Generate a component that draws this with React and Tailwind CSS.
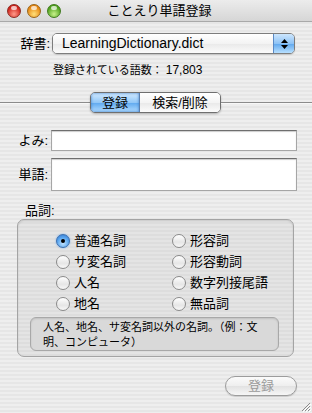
import React from 'react';

const font = { fontFamily: '"Liberation Sans", "Noto Sans CJK JP", sans-serif' };

function Light({ from, to, edge }) {
    return (
        <div
            className="w-[14px] h-[14px] rounded-full border relative overflow-hidden"
            style={{ background: `radial-gradient(circle at 50% 75%, ${from} 0%, ${to} 70%)`, borderColor: edge }}
        >
            <div className="absolute left-[3px] top-[1px] w-[6px] h-[4px] rounded-full bg-white/70" />
        </div>
    );
}

function Radio({ checked, label }) {
    return (
        <div className="flex items-center h-[21px]">
            {checked ? (
                <div className="w-[14px] h-[14px] rounded-full border border-[#3a6fb0] bg-[radial-gradient(circle_at_50%_70%,#bfe2ff_0%,#5aa6ef_55%,#2f75cf_100%)] flex items-center justify-center shadow-[0_0_2px_#6aa8ec]">
                    <div className="w-[4px] h-[4px] rounded-full bg-black" />
                </div>
            ) : (
                <div className="w-[14px] h-[14px] rounded-full border border-[#8a8a8a] bg-[linear-gradient(to_bottom,#ffffff,#e6e6e6_60%,#f8f8f8)]" />
            )}
            <span className="ml-[4px] text-[13px] text-black">{label}</span>
        </div>
    );
}

export default function App() {
    return (
        <div
            className="w-[312px] h-[413px] flex flex-col overflow-hidden bg-[repeating-linear-gradient(to_bottom,#eeeeee_0px,#eeeeee_2px,#e6e6e6_2px,#e6e6e6_4px)] relative"
            style={font}
        >
            {/* title bar */}
            <div className="h-[22px] flex items-center border-b border-[#a9a9a9] bg-[linear-gradient(to_bottom,#ececec,#d6d6d6)] relative">
                <div className="flex items-center gap-[6px] pl-[7px]">
                    <Light from="#ff9a8a" to="#cf1f17" edge="#8c2a22" />
                    <Light from="#ffe07a" to="#e6850f" edge="#9a6518" />
                    <Light from="#c8f28a" to="#4c9f1a" edge="#3f7a1d" />
                </div>
                <div className="flex-1 text-center text-[13px] text-black pr-[64px] pl-[10px]">ことえり単語登録</div>
            </div>

            {/* dictionary popup */}
            <div className="flex items-center mt-[11px] h-[21px]">
                <span className="w-[50px] text-right text-[13px] text-black">辞書:</span>
                <div className="ml-[2px] w-[243px] h-[21px] flex rounded-[5px] border border-[#7d7d7d] overflow-hidden shadow-[0_1px_1px_rgba(0,0,0,0.15)]">
                    <div className="flex-1 flex items-center pl-[9px] text-[14px] text-black bg-[linear-gradient(to_bottom,#ffffff,#f3f3f3_50%,#e9e9e9_51%,#fbfbfb)]">
                        LearningDictionary.dict
                    </div>
                    <div className="w-[21px] flex flex-col items-center justify-center gap-[2px] border-l border-[#5b89c4] bg-[linear-gradient(to_bottom,#cde6fd,#8ec3f6_50%,#5fa7ee_51%,#b8e0ff)]">
                        <svg width="7" height="4" viewBox="0 0 7 4"><path d="M3.5 0L7 4H0Z" fill="#000" /></svg>
                        <svg width="7" height="4" viewBox="0 0 7 4"><path d="M0 0H7L3.5 4Z" fill="#000" /></svg>
                    </div>
                </div>
            </div>

            <div className="mt-[9px] pl-[53px] text-[11px] leading-[14px] text-black">
                登録されている語数： <span className="text-[12px]">17,803</span>
            </div>

            {/* tab segmented control */}
            <div className="mt-[15px] h-[21px] flex items-center">
                <div className="w-[90px] h-[2px] border-t border-[#8c8c8c] border-b border-b-[#f8f8f8]" />
                <div className="w-[131px] h-[21px] flex rounded-[5px] border border-[#6f6f6f] overflow-hidden shadow-[0_1px_2px_rgba(0,0,0,0.25)]">
                    <div className="w-[49px] flex items-center justify-center text-[13px] text-black bg-[linear-gradient(to_bottom,#d4ebff,#92c7f7_50%,#5ea8ef_51%,#b2dcff)] shadow-[inset_0_0_3px_#3a79c7] border-r border-[#5a7fae]">
                        登録
                    </div>
                    <div className="flex-1 flex items-center justify-center text-[13px] text-black bg-[linear-gradient(to_bottom,#ffffff,#f4f4f4_50%,#e8e8e8_51%,#fcfcfc)]">
                        検索/削除
                    </div>
                </div>
                <div className="flex-1 h-[2px] border-t border-[#8c8c8c] border-b border-b-[#f8f8f8]" />
            </div>

            {/* fields */}
            <div className="mt-[17px] flex items-center">
                <span className="w-[48px] text-right text-[13px] text-black">よみ:</span>
                <div className="ml-[3px] w-[246px] h-[21px] bg-white border border-[#a6a6a6] border-t-[#6e6e6e] shadow-[inset_0_1px_1px_rgba(0,0,0,0.2)]" />
            </div>
            <div className="mt-[7px] flex items-center">
                <span className="w-[48px] text-right text-[13px] text-black">単語:</span>
                <div className="ml-[3px] w-[246px] h-[33px] bg-white border border-[#a6a6a6] border-t-[#6e6e6e] shadow-[inset_0_1px_1px_rgba(0,0,0,0.2)]" />
            </div>

            {/* part of speech */}
            <div className="mt-[12px] pl-[25px] text-[13px] leading-[16px] text-black">品詞:</div>
            <div className="ml-[17px] mr-[18px] h-[138px] rounded-[7px] border border-[#a4a4a4] bg-[repeating-linear-gradient(to_bottom,#e4e4e4_0px,#e4e4e4_2px,#dddddd_2px,#dddddd_4px)] shadow-[inset_0_1px_2px_rgba(0,0,0,0.12)] pt-[10px] flex flex-col">
                <div className="grid grid-cols-[116px_1fr] pl-[38px]">
                    <Radio checked label="普通名詞" />
                    <Radio label="形容詞" />
                    <Radio label="サ変名詞" />
                    <Radio label="形容動詞" />
                    <Radio label="人名" />
                    <Radio label="数字列接尾語" />
                    <Radio label="地名" />
                    <Radio label="無品詞" />
                </div>
                <div className="mt-[3px] ml-[12px] mr-[14px] h-[34px] rounded-[6px] border border-[#a8a8a8] bg-[#d9d9d9] shadow-[inset_0_1px_2px_rgba(0,0,0,0.12)] pl-[12px] pr-[6px] pt-[2px] text-[11px] leading-[15px] text-black">
                    人名、地名、サ変名詞以外の名詞。（例：文明、コンピュータ）
                </div>
            </div>

            {/* register button */}
            <div className="mt-[19px] flex justify-end pr-[15px]">
                <div className="w-[72px] h-[20px] rounded-full border border-[#9c9c9c] flex items-center justify-center text-[13px] text-[#9a9a9a] bg-[linear-gradient(to_bottom,#fbfbfb,#eeeeee_50%,#e2e2e2_51%,#f6f6f6)] shadow-[0_1px_1px_rgba(0,0,0,0.15)]">
                    登録
                </div>
            </div>

            {/* resize grip */}
            <svg className="absolute right-[1px] bottom-[1px]" width="11" height="11" viewBox="0 0 11 11">
                <path d="M10 2L2 10M10 5L5 10M10 8L8 10" stroke="#8a8a8a" strokeWidth="1" />
                <path d="M11 3L3 11M11 6L6 11M11 9L9 11" stroke="#ffffff" strokeWidth="1" />
            </svg>
        </div>
    );
}
